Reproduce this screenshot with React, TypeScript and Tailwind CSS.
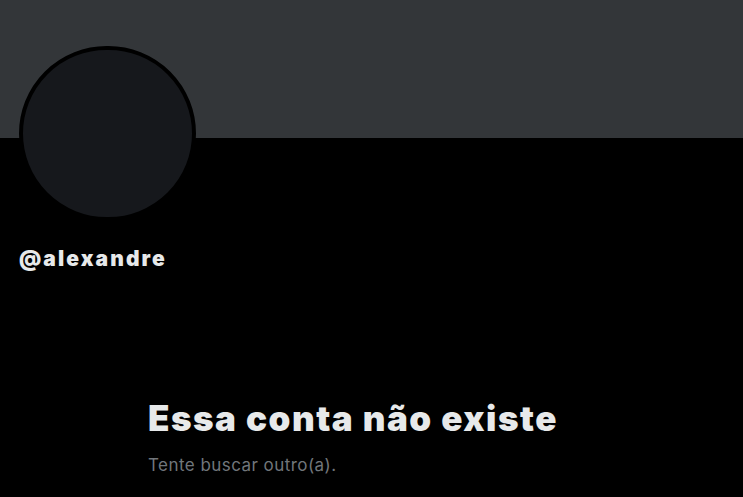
export default function App() {
  return (
    <div className="w-[743px] h-[497px] bg-black overflow-hidden" style={{ fontFamily: "Inter, 'Noto Sans', sans-serif" }}>
      <div className="h-[138px] bg-[#333639]" />
      <div className="px-[19px]">
        <div className="-mt-[92px] w-[177px] h-[175px] rounded-full border-4 border-black bg-[#16181c]" />
        <div className="mt-[25px] text-[21px] leading-[26px] font-black text-[#e7e9ea] tracking-[2.1px]">@alexandre</div>
      </div>
      <div className="pl-[148px] mt-[126px]">
        <div className="text-[35px] leading-[40px] font-black text-[#e7e9ea] tracking-[1.5px]">Essa conta não existe</div>
        <div className="mt-[16px] text-[17px] leading-[22px] text-[#71767b] tracking-[0.45px]">Tente buscar outro(a).</div>
      </div>
    </div>
  );
}
